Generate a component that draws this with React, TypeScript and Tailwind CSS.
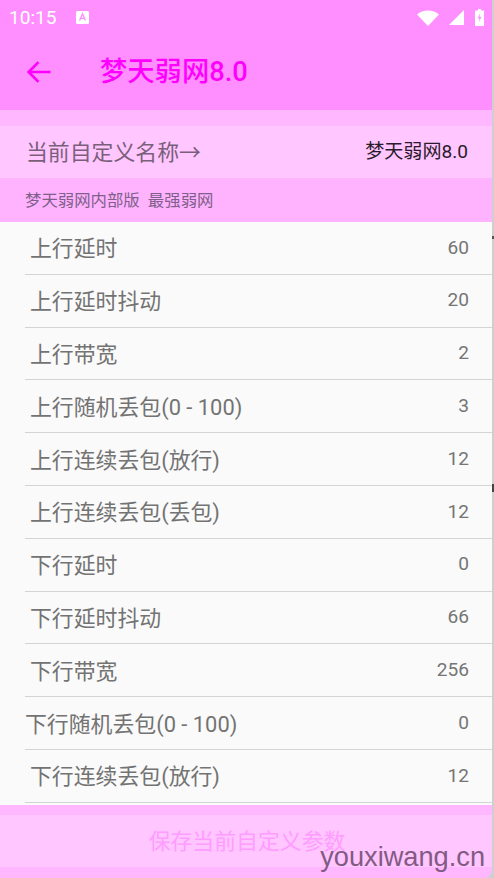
const rows: [string, string, boolean?][] = [
  ["上行延时", "60"],
  ["上行延时抖动", "20"],
  ["上行带宽", "2"],
  ["上行随机丢包(0 - 100)", "3"],
  ["上行连续丢包(放行)", "12"],
  ["上行连续丢包(丢包)", "12"],
  ["下行延时", "0"],
  ["下行延时抖动", "66"],
  ["下行带宽", "256"],
  ["下行随机丢包(0 - 100)", "0", true],
  ["下行连续丢包(放行)", "12"],
];

export default function App() {
  return (
    <div className="relative h-[878px] w-[494px] overflow-hidden bg-[#cfcfcf] font-['Roboto','Noto_Sans_CJK_SC',sans-serif]">
      <div className="flex h-full w-[492px] flex-col overflow-hidden rounded-br-lg">
        <div className="flex h-[32px] items-center justify-between bg-[#ff8fff] pl-[9px] pr-[8px] pt-[3px] text-white">
          <div className="flex items-center">
            <span className="text-[19.1px] leading-none">10:15</span>
            <svg className="ml-[19px]" width="13" height="13" viewBox="0 0 13 13">
              <rect x="0" y="0" width="13" height="13" rx="1.5" fill="#fff" />
              <path d="M3.6 9.5 6.5 2.8 9.4 9.5M4.7 7.4h3.6" fill="none" stroke="#ff8fff" strokeWidth="1.4" />
            </svg>
          </div>
          <div className="flex items-center gap-[10px]">
            <svg width="22" height="16" viewBox="0 0 22 16"><path d="M0 4.5C3 1.8 6.8 0.5 11 0.5s8 1.3 11 4L11 16z" fill="#fff" /></svg>
            <svg width="15" height="15" viewBox="0 0 15 15"><path d="M15 0v15H0z" fill="#fff" /></svg>
            <svg className="ml-[1px]" width="9" height="17" viewBox="0 0 9 17">
              <path d="M3 0h3v1.5h3V17H0V1.5h3z" fill="#fff" />
              <path d="M5.2 4 2.6 9.4h1.9l-.8 4 2.8-5.6H4.6z" fill="#ff8fff" />
            </svg>
          </div>
        </div>
        <div className="flex h-[78px] items-center bg-[#ff8fff] pt-[2px]">
          <svg className="ml-[26px]" width="26" height="26" viewBox="0 0 26 26">
            <path d="M24.5 13H3M12.5 3.2 2.6 13l9.9 9.8" fill="none" stroke="#ff00ff" strokeWidth="2.6" />
          </svg>
          <span className="ml-[48px] pt-[2px] text-[27.3px] font-medium leading-none text-[#ff00ff]">梦天弱网8.0</span>
        </div>
        <div className="h-[16px] bg-[#ffb8ff]" />
        <div className="flex h-[52px] items-center justify-between bg-[#ffc6ff] pl-[26px] pr-[24px]">
          <span className="pt-[2px] text-[21.87px] text-[#7a5f7a]">当前自定义名称→</span>
          <span className="text-[19.1px] text-[#2a1a2a]">梦天弱网8.0</span>
        </div>
        <div className="flex h-[44px] items-center bg-[#ffb3ff] pl-[25px] pt-[3px] text-[16.4px] text-[#80608a]">
          梦天弱网内部版&nbsp;&nbsp;最强弱网
        </div>
        <div className="min-h-0 flex-1 overflow-hidden bg-[#fafafa]">
          {rows.map(([label, value, flush]) => (
            <div key={label} className="ml-[25px] flex h-[52.8px] items-center justify-between border-b border-[#d4d4d4] pr-[23px]">
              <span className={flush ? "pt-[4px] text-[21.87px] text-[#737373]" : "pl-[5px] pt-[4px] text-[21.87px] text-[#737373]"}>{label}</span>
              <span className="text-[19.1px] text-[#757575]">{value}</span>
            </div>
          ))}
        </div>
        <div className="h-[10px] bg-[#ffb8ff]" />
        <div className="flex h-[52px] items-center justify-center bg-[#ffc6ff] pl-[2px] pt-[2px] text-[21.87px] text-[#ff9cff]">
          保存当前自定义参数
        </div>
        <div className="h-[11px] bg-[#ffb8ff]" />
      </div>
      <div className="absolute right-[9px] top-[843px] font-['Liberation_Sans',sans-serif] text-[27.2px] leading-none text-[#835a83]">
        youxiwang.cn
      </div>
      <div className="absolute right-0 top-[236px] h-[3px] w-[2px] bg-[#555555]" />
      <div className="absolute right-0 top-[484px] h-[8px] w-[2px] bg-[#444444]" />
    </div>
  );
}
